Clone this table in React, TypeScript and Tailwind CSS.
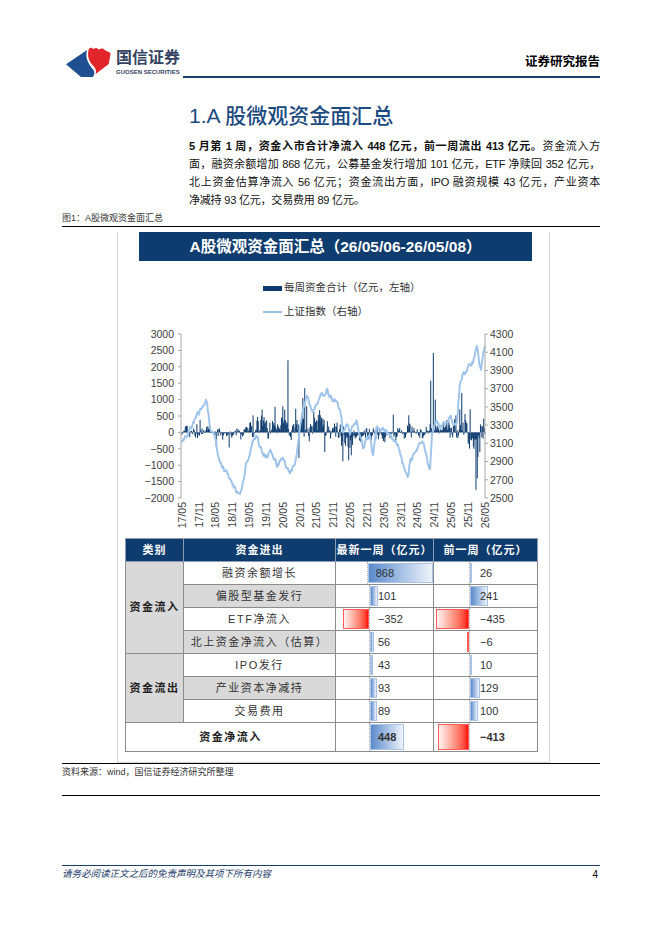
import React from "react";

// deterministic noise so the chart looks the same every run
function makeRng(seed: number) {
    let s = seed;
    return () => {
        s |= 0;
        s = (s + 0x6d2b79f5) | 0;
        let t = Math.imul(s ^ (s >>> 15), 1 | s);
        t = (t + Math.imul(t ^ (t >>> 7), 61 | t)) ^ t;
        return ((t ^ (t >>> 14)) >>> 0) / 4294967296;
    };
}

const X0 = 182;
const X1 = 485;
const N = 470;
const DX = (X1 - X0) / (N - 1);

const yLeft = (v: number) => 433.4 - v * 0.0328;
const yRight = (v: number) => 499 - (v - 2500) * 0.0911;

const segs: [number, number, number][] = [
    [182, 30, 180],
    [214, -40, 220],
    [244, 120, 350],
    [280, 280, 500],
    [296, 150, 450],
    [312, 200, 450],
    [322, 80, 350],
    [338, -180, 450],
    [357, -60, 300],
    [368, 20, 250],
    [384, -40, 250],
    [398, 30, 260],
    [412, -60, 230],
    [428, 60, 300],
    [438, 80, 260],
    [448, 60, 350],
    [458, 250, 500],
    [468, -250, 450],
    [480, 100, 400],
];

const spikes: [number, number][] = [
    [288, 2200], [305, 1350], [303, 1050], [307, 800], [299, -780], [431, 1580],
    [433, 2420], [435, 1000], [462, 1200], [460, 700], [476, -1750], [477, -1400],
    [478, -750], [474, -500], [480, -600], [484, 420], [343, -880], [349, -850],
    [351, -700], [275, 780], [262, 700], [253, 520], [229, -460], [216, -430],
    [296, 720], [314, 620], [325, -600], [409, 520], [393, 540], [470, 700],
    [456, 520], [447, 380], [200, 380], [197, 250],
];

const lineKeys: [number, number][] = [
    [182, 3093], [186, 3180], [190, 3250], [194, 3330], [197, 3420], [203, 3480], [207, 3565],
    [210, 3280], [215, 3150], [220, 2870], [225, 2780], [230, 2730], [234, 2620], [237, 2545],
    [242, 2600], [246, 2850], [250, 3015], [254, 3150], [257, 3200], [260, 3050], [264, 2980],
    [267, 2950], [270, 3000], [273, 2980], [277, 2850], [280, 2900], [283, 2920], [287, 2820],
    [290, 2780], [293, 2850], [295, 2900], [298, 3100], [300, 3310], [304, 3500], [307, 3675],
    [310, 3500], [313, 3450], [317, 3520], [320, 3610], [324, 3650], [327, 3700], [331, 3600],
    [334, 3560], [337, 3560], [340, 3450], [343, 3235], [347, 3300], [350, 3230], [353, 3300],
    [357, 3340], [360, 3200], [363, 3060], [367, 3150], [370, 3200], [373, 2950], [377, 3300],
    [380, 3270], [383, 3250], [387, 3200], [390, 3200], [394, 3150], [397, 3120], [400, 3000],
    [403, 2870], [406, 2800], [408, 2740], [410, 2900], [414, 2980], [417, 3050], [420, 3080],
    [423, 3100], [427, 2950], [430, 2800], [432, 3200], [434, 3300], [437, 3345], [440, 3300],
    [443, 3290], [447, 3350], [450, 3380], [454, 3330], [457, 3320], [460, 3750], [463, 3860],
    [467, 3880], [470, 3960], [473, 4000], [475, 4080], [477, 4135], [479, 4000], [481, 3880],
    [483, 4080], [485, 4180],
];

function buildSeries() {
    const r = makeRng(20260508);
    const bars: { x: number; v: number }[] = [];
    let ar = 0;
    for (let i = 0; i < N; i++) {
        const x = X0 + i * DX;
        let seg = segs[0];
        for (const s of segs) if (s[0] <= x) seg = s;
        const n = r() * 2 - 1;
        ar = 0.45 * ar + n * Math.abs(n);
        bars.push({ x, v: seg[1] + seg[2] * ar * 0.9 });
    }
    for (const [sx, sv] of spikes) {
        const i = Math.round((sx - X0) / DX);
        if (bars[i]) bars[i].v = sv;
    }
    const pts: string[] = [];
    let j = 0;
    for (let i = 0; i < N; i++) {
        const x = X0 + i * DX;
        let k = 0;
        while (k < lineKeys.length - 2 && lineKeys[k + 1][0] < x) k++;
        const [ax, av] = lineKeys[k];
        const [bx, bv] = lineKeys[k + 1];
        const t = Math.min(1, Math.max(0, (x - ax) / (bx - ax)));
        j = 0.6 * j + (r() - 0.5) * 50;
        pts.push(`${x.toFixed(2)},${yRight(av + (bv - av) * t + j).toFixed(2)}`);
    }
    return { bars, line: pts.join(" ") };
}

const series = buildSeries();

const leftTicks = [3000, 2500, 2000, 1500, 1000, 500, 0, -500, -1000, -1500, -2000];
const rightTicks = [4300, 4100, 3900, 3700, 3500, 3300, 3100, 2900, 2700, 2500];
const xLabels = [
    "17/05", "17/11", "18/05", "18/11", "19/05", "19/11", "20/05", "20/11", "21/05",
    "21/11", "22/05", "22/11", "23/05", "23/11", "24/05", "24/11", "25/05", "25/11", "26/05",
];

function fmt(v: number) {
    return v < 0 ? `\u2212${Math.abs(v)}` : `${v}`;
}

function FlowChart() {
    return (
        <svg width={431} height={215} className="block">
            <g transform="translate(-118,-320)" fontFamily="'Liberation Sans', Arial, sans-serif" fontSize={10.5} fill="#404040">
                {series.bars.map((b, i) => {
                    const y0 = yLeft(0);
                    const y1 = yLeft(b.v);
                    return (
                        <rect
                            key={i}
                            x={b.x - 0.5}
                            y={Math.min(y0, y1)}
                            width={1}
                            height={Math.max(0.6, Math.abs(y1 - y0))}
                            fill="#0d3b6e"
                        />
                    );
                })}
                <polyline points={series.line} fill="none" stroke="#9dc3ea" strokeWidth={1.9} strokeLinejoin="round" />

                <line x1={181} y1={335} x2={181} y2={499} stroke="#a6a6a6" strokeWidth={1} />
                {leftTicks.map((t) => (
                    <g key={t}>
                        <line x1={178} x2={181} y1={yLeft(t)} y2={yLeft(t)} stroke="#a6a6a6" />
                        <text x={174} y={yLeft(t) + 3.8} textAnchor="end">{fmt(t)}</text>
                    </g>
                ))}
                <line x1={485} y1={335} x2={485} y2={499} stroke="#a6a6a6" strokeWidth={1} />
                {rightTicks.map((t) => (
                    <g key={t}>
                        <line x1={485} x2={488} y1={yRight(t)} y2={yRight(t)} stroke="#a6a6a6" />
                        <text x={490} y={yRight(t) + 3.8}>{t}</text>
                    </g>
                ))}
                {xLabels.map((l, i) => {
                    const x = X0 + i * (303 / 18);
                    return (
                        <text key={l} transform={`translate(${x + 3.8},503) rotate(-90)`} textAnchor="end">
                            {l}
                        </text>
                    );
                })}
            </g>
        </svg>
    );
}

const SCALE = 0.0752;

function ValueCell({ v, neg, pad, bold, h }: { v: number; neg: number; pad: number; bold?: boolean; h: string }) {
    const w = Math.abs(v) * SCALE;
    return (
        <td className="border border-[#8c8c8c] p-0">
            <div className={`flex ${h}`}>
                <div className="flex justify-end py-[1px]" style={{ width: neg }}>
                    {v < 0 && (
                        <div
                            className="h-full bg-gradient-to-r from-[#fff2f2] to-[#ff0000] border border-[#ff5a5a]"
                            style={{ width: w }}
                        />
                    )}
                </div>
                <div className="grid flex-1 py-[1px] border-l border-dotted border-[#b0b0b0]">
                    {v > 0 && (
                        <div
                            className="[grid-area:1/1] h-full bg-gradient-to-r from-[#5b8bcb] to-[#eef3fa] border border-[#a9c3e6]"
                            style={{ width: w }}
                        />
                    )}
                    <span
                        className={`[grid-area:1/1] self-center relative text-[11px] text-[#333] ${bold ? "font-bold" : ""}`}
                        style={{ paddingLeft: pad }}
                    >
                        {v < 0 ? `\u2212${Math.abs(v)}` : v}
                    </span>
                </div>
            </div>
        </td>
    );
}

const rows = [
    { name: "融资余额增长", a: 868, b: 26, gray: false },
    { name: "偏股型基金发行", a: 101, b: 241, gray: true },
    { name: "ETF净流入", a: -352, b: -435, gray: false },
    { name: "北上资金净流入（估算）", a: 56, b: -6, gray: true },
    { name: "IPO发行", a: 43, b: 10, gray: false },
    { name: "产业资本净减持", a: 93, b: 129, gray: true },
    { name: "交易费用", a: 89, b: 100, gray: false },
];

function FlowTable() {
    return (
        <table className="ml-[7px] w-[412px] border-collapse table-fixed">
            <colgroup>
                <col className="w-[58px]" />
                <col className="w-[152px]" />
                <col className="w-[98px]" />
                <col className="w-[104px]" />
            </colgroup>
            <thead>
                <tr className="h-[23px] bg-[#0f3c6e] text-white text-[11px] font-bold">
                    <th className="border border-[#8c9bb0] font-bold tracking-[1px]">类别</th>
                    <th className="border border-[#8c9bb0] font-bold tracking-[1px]">资金进出</th>
                    <th className="border border-[#8c9bb0] font-bold tracking-[1px]">最新一周（亿元）</th>
                    <th className="border border-[#8c9bb0] font-bold tracking-[1px]">前一周（亿元）</th>
                </tr>
            </thead>
            <tbody>
                {rows.map((r, i) => (
                    <tr key={r.name}>
                        {i === 0 && (
                            <td rowSpan={4} className="border border-[#8c8c8c] bg-[#d9d9d9] text-center text-[11px] font-bold tracking-[1.5px] text-[#222]">
                                资金流入
                            </td>
                        )}
                        {i === 4 && (
                            <td rowSpan={3} className="border border-[#8c8c8c] bg-[#d9d9d9] text-center text-[11px] font-bold tracking-[1.5px] text-[#222]">
                                资金流出
                            </td>
                        )}
                        <td className={`border border-[#8c8c8c] text-center text-[11px] tracking-[1.5px] text-[#333] ${r.gray ? "bg-[#d9d9d9]" : "bg-white"}`}>
                            {r.name}
                        </td>
                        <ValueCell v={r.a} neg={33} pad={8} h="h-[22px]" />
                        <ValueCell v={r.b} neg={35} pad={10} h="h-[22px]" />
                    </tr>
                ))}
                <tr>
                    <td colSpan={2} className="border border-[#8c8c8c] text-center text-[11px] font-bold tracking-[1.5px] text-[#222]">
                        资金净流入
                    </td>
                    <ValueCell v={448} neg={33} pad={8} bold h="h-[28px]" />
                    <ValueCell v={-413} neg={35} pad={10} bold h="h-[28px]" />
                </tr>
            </tbody>
        </table>
    );
}

function Logo() {
    return (
        <div className="flex items-center gap-[5px]">
            <svg width={46} height={33} viewBox="0 0 150 108">
                <path d="M3,63 L72,16 C64,42 78,64 92,80 C98,88 97,98 90,105 L52,105 Z" fill="#1d4f91" />
                <path
                    d="M78,12 L86,8 L92,13 L102,9 L110,15 L122,11 L134,19 L149,26 L143,62 L114,84 L100,95 C103,85 100,77 95,71 C80,56 70,38 78,12 Z"
                    fill="#e2242b"
                />
            </svg>
            <div className="flex flex-col">
                <span className="text-[16px] leading-[20px] font-bold text-[#34435f]">国信证券</span>
                <span className="text-[6px] leading-[8px] font-bold text-[#34435f]">GUOSEN SECURITIES</span>
            </div>
        </div>
    );
}

const lineCls = "text-justify [text-align-last:justify]";

export default function App() {
    return (
        <div className="w-[662px] h-[936px] bg-white overflow-hidden text-black font-['Liberation_Sans','Noto_Sans_CJK_SC',sans-serif]">
            {/* header */}
            <div className="flex pl-[65px] pr-[62px] pt-[45px]">
                <Logo />
                <div className="flex-1 ml-[3px] flex justify-end items-end pb-[6px] border-b-2 border-[#1e3d6b]">
                    <span className="text-[12.5px] leading-[16px] font-bold">证券研究报告</span>
                </div>
            </div>

            <div className="pl-[189px] pr-[62px]">
                <h1 className="mt-[25px] text-[21px] leading-[26px] text-[#1b4a80] font-medium">1.A 股微观资金面汇总</h1>
                <div className="mt-[8px] text-[11px] leading-[18px] tracking-[-0.2px] text-[#111] whitespace-nowrap">
                    <div className={lineCls}>
                        <b>5 月第 1 周，资金入市合计净流入 448 亿元，前一周流出 413 亿元。</b>资金流入方
                    </div>
                    <div className={lineCls}>面，融资余额增加 868 亿元，公募基金发行增加 101 亿元，ETF 净赎回 352 亿元，</div>
                    <div className={lineCls}>北上资金估算净流入 56 亿元；资金流出方面，IPO 融资规模 43 亿元，产业资本</div>
                    <div>净减持 93 亿元，交易费用 89 亿元。</div>
                </div>
            </div>

            <div className="mt-[3px] pl-[62px] text-[9px] leading-[12px] text-[#333]">图1：A股微观资金面汇总</div>
            <div className="mt-[2px] mx-[62px] border-t-[1.5px] border-black" />

            {/* figure panel */}
            <div className="ml-[117px] w-[433px] h-[531px] border-x border-b border-[#d4d4d4]">
                <div className="mt-[5px] ml-[21px] w-[393px] h-[29px] bg-[#0f3c6e] flex items-center justify-center">
                    <span className="text-white text-[15.5px] font-semibold">A股微观资金面汇总（26/05/06-26/05/08）</span>
                </div>
                <div className="mt-[20px] pl-[145px] flex items-center h-[14px] text-[10.5px] text-[#333]">
                    <span className="w-[19px] h-[5px] bg-[#0d3b6e]" />
                    <span className="ml-[2px]">每周资金合计（亿元，左轴）</span>
                </div>
                <div className="mt-[10px] pl-[145px] flex items-center h-[14px] text-[10.5px] text-[#333]">
                    <span className="w-[19px] h-[2px] bg-[#9dc3ea]" />
                    <span className="ml-[2px]">上证指数（右轴）</span>
                </div>
                <FlowChart />
                <div className="mt-[4px]">
                    <FlowTable />
                </div>
            </div>

            <div className="mt-[0px] mx-[62px] border-t-[1.5px] border-black" />
            <div className="mt-[2px] pl-[62px] text-[9px] leading-[12px] text-[#333]">资料来源：wind，国信证券经济研究所整理</div>
            <div className="mt-[17px] mx-[62px] border-t border-black" />

            {/* footer */}
            <div className="mt-[69px] mx-[62px] border-t border-[#1e3d6b] flex justify-between items-start pt-[1px]">
                <span className="italic text-[9.5px] leading-[14px] text-[#1e3d6b]">请务必阅读正文之后的免责声明及其项下所有内容</span>
                <span className="text-[10px] leading-[14px] pr-[2px] mt-[1px]">4</span>
            </div>
        </div>
    );
}
